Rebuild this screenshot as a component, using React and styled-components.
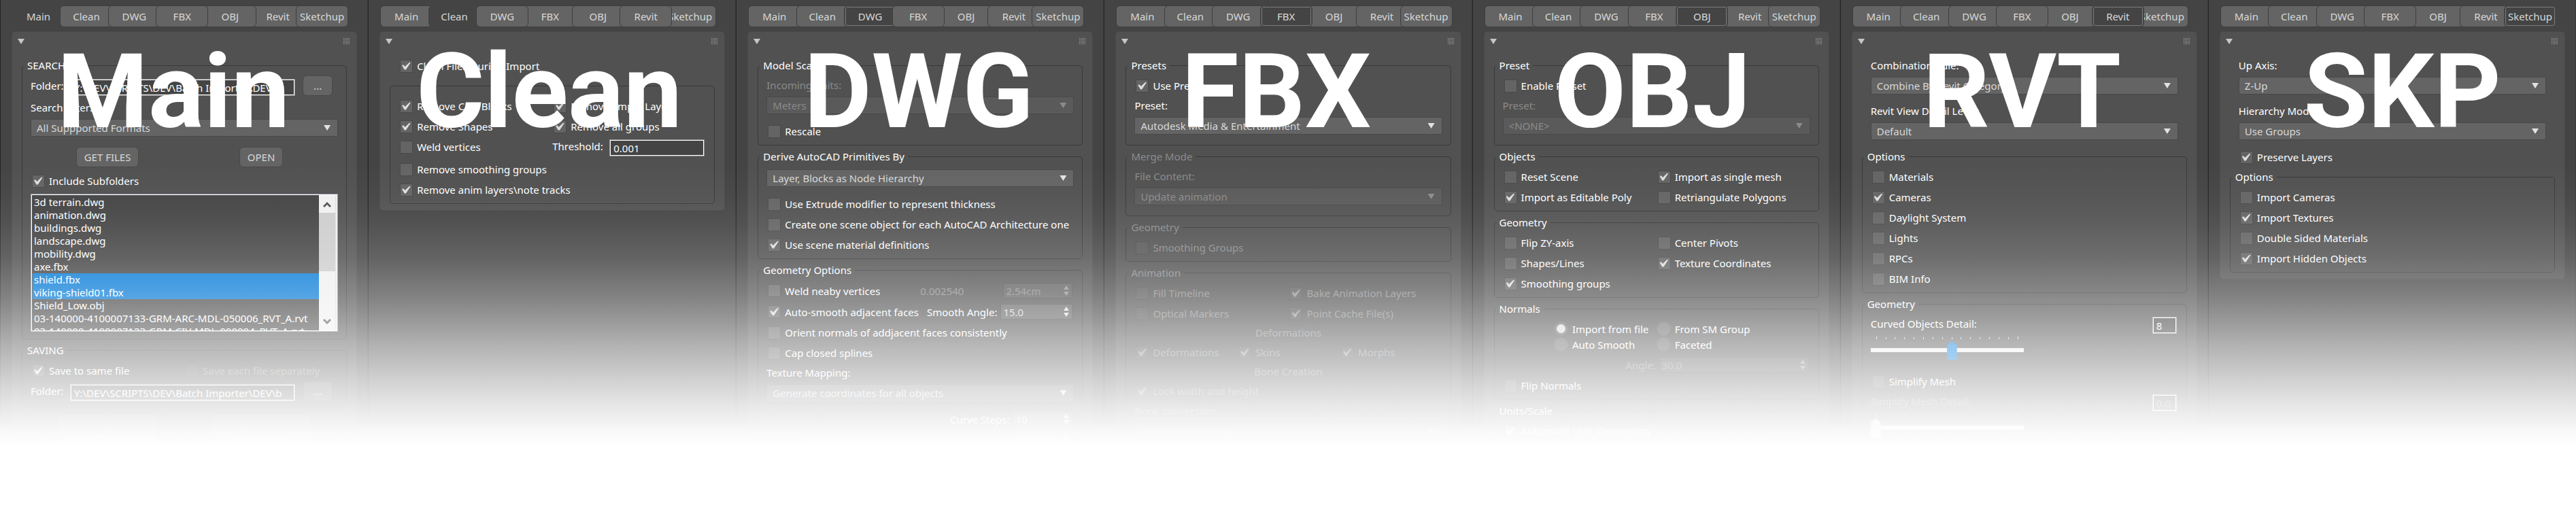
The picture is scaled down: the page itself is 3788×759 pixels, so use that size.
import React, { useId } from "react";
import styled, { createGlobalStyle, css } from "styled-components";

const GlobalStyle = createGlobalStyle`
  *, *::before, *::after { box-sizing: border-box; }
  body { margin: 0; background: #fff; }
  body, button, input, select { font-family: "Noto Sans", "DejaVu Sans Condensed", sans-serif; font-size: 15px; line-height: 20px; }
`;

const color = {
  window: "#444444",
  rollout: "#515151",
  control: "#646464",
  edge: "#494949",
  line: "#393939",
  text: "#ffffff",
  soft: "#d8d8d8",
  off: "#8b8b8b",
};

const Stage = styled.main`
  position: relative;
  display: grid;
  grid-template-columns: repeat(7, minmax(0, 1fr));
  height: 100vh;
  overflow: hidden;

  &::after {
    content: "";
    position: absolute;
    inset: 0;
    z-index: 10;
    pointer-events: none;
    background: linear-gradient(
      rgba(255, 255, 255, 0) 240px,
      rgba(255, 255, 255, 0.03) 290px,
      rgba(255, 255, 255, 0.08) 330px,
      rgba(255, 255, 255, 0.17) 380px,
      rgba(255, 255, 255, 0.32) 433px,
      rgba(255, 255, 255, 0.44) 467px,
      rgba(255, 255, 255, 0.56) 500px,
      rgba(255, 255, 255, 0.67) 533px,
      rgba(255, 255, 255, 0.78) 567px,
      rgba(255, 255, 255, 0.88) 600px,
      rgba(255, 255, 255, 0.96) 633px,
      #fff 656px
    );
  }
`;

const Panel = styled.section`
  position: relative;
  min-width: 0;
  padding: 8px 15px 0 16px;
  background: ${color.window};
  border-left: 1px solid #242424;
  border-right: 1px solid #3a3a3a;
  overflow: hidden;
`;

const Title = styled.h2`
  position: absolute;
  top: 49px;
  left: ${(p) => p.$x}px;
  z-index: 5;
  margin: 0;
  color: #fff;
  font: bold 153px/172px Roboto, "Liberation Sans", sans-serif;
  white-space: nowrap;
  pointer-events: none;
`;

const TabRow = styled.nav`
  display: grid;
  grid-template-columns: repeat(5, minmax(0, 1fr)) 65px 77px;
  padding: 0 13px 0 1px;
  margin-bottom: 6px;
  isolation: isolate;
`;

const Tab = styled.button`
  position: relative;
  z-index: ${(p) => p.$level};
  width: 77px;
  height: 32px;
  padding: 0;
  color: ${color.soft};
  background: ${(p) => (p.$active ? color.window : color.control)};
  border: 1px solid ${(p) => (p.$active ? color.window : "#3e3e3e")};
  border-radius: 6px;
  ${(p) => p.$focus && css`outline: 1px dotted #b4b4b4; outline-offset: -3px;`}
`;

const Rollout = styled.div`
  display: flex;
  flex-direction: column;
  padding: 0 14px 7px;
  background: ${color.rollout};
  border: 1px solid ${color.edge};
  border-radius: 5px;
`;

const RolloutBar = styled.header`
  display: flex;
  justify-content: space-between;
  align-items: center;
  height: 27px;
  margin: 0 -4px 8px -6px;
`;

const BarButton = styled.button`
  display: flex;
  padding: 0;
  border: 0;
  background: none;
`;

const Loose = styled.div`
  padding: 0 13px;
`;

const Group = styled.fieldset`
  min-width: 0;
  margin: ${(p) => (p.$bare ? "14px" : "4px")} 0 2px;
  padding: ${(p) => (p.$bare ? "14px" : "5px")} 12px 5px;
  border: 1px solid ${color.line};
  border-radius: 5px;
`;

const Legend = styled.legend`
  margin-left: -10px;
  padding: 0 5px;
  color: ${(p) => (p.$off ? color.off : color.text)};
`;

const Row = styled.div`
  display: grid;
  grid-template-columns: repeat(${(p) => p.$cols || 1}, minmax(0, 1fr));
`;

const ThresholdRow = styled(Row)`
  min-height: 33px;
`;

const SpinRow = styled.div`
  display: flex;
  align-items: center;
  height: 31px;
  padding-right: 2px;
`;

const CheckLabel = styled.label`
  display: flex;
  align-items: center;
  gap: 6px;
  height: 30px;
  padding-left: 2px;
  color: ${(p) => (p.$off ? color.off : color.text)};
  white-space: nowrap;
`;

const Box = styled.input`
  appearance: none;
  flex: none;
  display: grid;
  place-items: center;
  width: 19px;
  height: 19px;
  margin: 0;
  background: ${color.control};
  border: 1px solid ${color.edge};

  &:disabled { background: #575757; }

  &:checked::before {
    content: "";
    width: 13px;
    height: 11px;
    background: #dedede;
    clip-path: polygon(0 44%, 16% 34%, 34% 60%, 84% 2%, 100% 0, 90% 18%, 44% 100%, 28% 100%);
  }

  &:disabled:checked::before { background: #929292; }
`;

const RadioGrid = styled.div`
  display: grid;
  grid-template-columns: 1fr 2fr 2fr 1fr;
  grid-auto-rows: 23px;
  padding: 3px 0;
`;

const RadioLabel = styled.label`
  grid-column: ${(p) => p.$col};
  display: flex;
  align-items: center;
  gap: 6px;
  color: ${color.text};
  white-space: nowrap;
`;

const Radio = styled.input`
  appearance: none;
  flex: none;
  display: grid;
  place-items: center;
  width: 21px;
  height: 21px;
  margin: 0;
  background: ${color.control};
  border: 1px solid #5a5a5a;
  border-radius: 50%;

  &:checked::before {
    content: "";
    width: 13px;
    height: 13px;
    border-radius: 50%;
    background: #dedede;
  }
`;

const Caption = styled.label`
  display: block;
  padding: 4px 0 7px;
  color: ${(p) => (p.$off ? color.off : color.text)};
`;

const Subhead = styled.div`
  height: 27px;
  line-height: 27px;
  text-align: center;
  color: ${color.off};
`;

const SelectWrap = styled.div`
  position: relative;
  height: 26px;
  margin: ${(p) => (p.$alone ? "4px" : "0")} 0 10px;

  &::after {
    content: "";
    position: absolute;
    top: 9px;
    right: 11px;
    width: 10px;
    height: 8px;
    background: ${(p) => (p.$off ? color.off : "#e2e2e2")};
    clip-path: polygon(0 0, 100% 0, 50% 100%);
    pointer-events: none;
  }
`;

const SelectBox = styled.select`
  appearance: none;
  width: 100%;
  height: 26px;
  padding: 0 30px 0 8px;
  color: ${color.soft};
  background: ${color.control};
  border: 1px solid ${color.edge};
  border-radius: 0;
  opacity: 1;

  &:disabled { color: ${color.off}; background: #5a5a5a; }
`;

const FolderRow = styled.div`
  display: flex;
  align-items: flex-end;
  height: 30px;
  margin-bottom: 3px;
  padding-right: 8px;

  label { width: 58px; align-self: center; color: ${color.text}; }
`;

const Field = styled.input`
  flex: 1;
  min-width: 0;
  height: 25px;
  margin: 0;
  padding: 0 5px;
  color: ${color.text};
  background: ${color.window};
  border: 1px solid #fff;
  outline: 1px solid #8e8e8e;
  outline-offset: -1px;
  box-shadow: inset 0 0 0 1px #fff;
  border-radius: 0;
`;

const SmallField = styled(Field)`
  flex: none;
  width: 36px;
  margin-top: 4px;
  color: ${(p) => (p.disabled ? color.off : color.text)};
`;

const PushButton = styled.button`
  height: ${(p) => (p.$tall ? "72px" : "30px")};
  width: ${(p) => (p.$tall ? "148px" : "auto")};
  padding: 0 11px;
  color: ${color.soft};
  background: ${color.control};
  border: 1px solid ${color.edge};
  border-radius: 6px;
  white-space: nowrap;
`;

const BrowseButton = styled(PushButton)`
  width: 44px;
  margin-left: 11px;
  padding: 0;
`;

const ButtonRow = styled.div`
  display: grid;
  grid-template-columns: 1fr 1fr;
  place-items: center;
  height: 40px;
`;

const ImportRow = styled(ButtonRow)`
  height: 88px;
`;

const ListFrame = styled.div`
  display: flex;
  height: 203px;
  margin: 4px 0 5px;
  padding: 1px;
  background: ${color.window};
  border: 1px solid #8d939b;
  box-shadow: inset 0 0 0 1px #fff;
`;

const FileList = styled.ul`
  flex: 1;
  min-width: 0;
  margin: 0;
  padding: 1px 0 0 1px;
  list-style: none;
  overflow: hidden;
`;

const FileItem = styled.li`
  height: 19px;
  padding-left: 2px;
  line-height: 19px;
  color: #fff;
  white-space: nowrap;
  overflow: hidden;
  background: ${(p) => (p.$selected ? "#0078d7" : "transparent")};
`;

const ScrollStrip = styled.div`
  display: flex;
  flex-direction: column;
  width: 26px;
  background: #f0f0f0;
  border-right: 2px solid #e2e2e2;
`;

const ScrollArrow = styled.button`
  display: grid;
  place-items: center;
  height: 26px;
  padding: 0;
  border: 0;
  background: #f0f0f0;
`;

const ScrollThumb = styled.div`
  height: 86px;
  margin-bottom: auto;
  background: #cdcdcd;
`;

const SpinWrap = styled.span`
  position: relative;
  flex: none;
  display: flex;
  width: ${(p) => p.$w};
  margin-left: ${(p) => (p.$push ? "auto" : "5px")};

  svg { position: absolute; top: 4px; right: 5px; }
`;

const SpinInput = styled.input`
  width: 100%;
  height: 23px;
  margin: 0;
  padding: 0 20px 0 3px;
  color: ${color.soft};
  background: ${color.control};
  border: 1px solid ${color.edge};
  border-radius: 0;

  &:disabled { color: ${color.off}; background: #5a5a5a; }
`;

const SpinLabel = styled.label`
  margin-left: auto;
  color: ${(p) => (p.$off ? color.off : color.text)};
  white-space: nowrap;
`;

const HalfLabel = styled(SpinLabel)`
  width: 50%;
  margin: 0;
  text-align: right;
`;

const WeldValue = styled.output`
  position: absolute;
  left: 50%;
  color: ${color.off};
`;

const WeldRow = styled(SpinRow)`
  position: relative;
`;

const ThresholdField = styled.div`
  display: flex;
  align-items: flex-start;
  padding: 4px 2px 0 0;

  label { width: 84px; color: ${color.text}; }
`;

const DetailRow = styled.div`
  display: flex;
  justify-content: space-between;
  align-items: flex-start;
  height: 84px;
  padding-right: 2px;
`;

const DetailControl = styled.div`
  width: 50%;
`;

const DetailCaption = styled(Caption)`
  padding-bottom: 9px;
`;

const Ticks = styled.div`
  display: flex;
  justify-content: space-between;
  height: 5px;
  margin-bottom: 1px;
  padding: 0 8px;

  i { width: 1px; height: 3px; margin-top: 1px; background: #e0e0e0; }
  i:first-child, i:last-child { height: 4px; margin-top: 0; }
`;

const Slider = styled.input`
  appearance: none;
  display: block;
  width: 100%;
  height: 28px;
  margin: 0;
  background: none;

  &::-webkit-slider-runnable-track { height: 6px; background: #f0f0f0; }

  &::-webkit-slider-thumb {
    appearance: none;
    width: 15px;
    height: 28px;
    margin-top: -11px;
    background: ${(p) => (p.disabled ? "#cccccc" : "#0078d7")};
    clip-path: polygon(50% 0, 100% 25%, 100% 100%, 0 100%, 0 25%);
  }
`;

function Check({ label, on, off }) {
  return (
    <CheckLabel $off={off}>
      <Box type="checkbox" defaultChecked={on} disabled={off} />
      {label}
    </CheckLabel>
  );
}

function Choice({ label, value, off }) {
  const id = useId();
  return (
    <>
      {label && <Caption htmlFor={id} $off={off}>{label}</Caption>}
      <SelectWrap $off={off} $alone={!label}>
        <SelectBox id={id} disabled={off} aria-label={label ? undefined : value}>
          <option>{value}</option>
        </SelectBox>
      </SelectWrap>
    </>
  );
}

function Spinner({ id, value, w, off, push }) {
  return (
    <SpinWrap $w={w} $push={push}>
      <SpinInput id={id} defaultValue={value} disabled={off} aria-label={id ? undefined : value} />
      <svg width="8" height="15" viewBox="0 0 8 15" fill={off ? "#929292" : "#e2e2e2"} aria-hidden="true">
        <path d="M4 0 8 6H0ZM4 15 0 9h8Z" />
      </svg>
    </SpinWrap>
  );
}

function LabelledSpinner({ label, value, w, off }) {
  const id = useId();
  return (
    <SpinRow>
      <SpinLabel htmlFor={id} $off={off}>{label}</SpinLabel>
      <Spinner id={id} value={value} w={w} off={off} />
    </SpinRow>
  );
}

function Folder({ value }) {
  const id = useId();
  return (
    <FolderRow>
      <label htmlFor={id}>Folder:</label>
      <Field id={id} defaultValue={value} />
      <BrowseButton type="button" aria-label="Browse">...</BrowseButton>
    </FolderRow>
  );
}

function Detail({ label, value, max, at, off }) {
  const id = useId();
  return (
    <DetailRow>
      <DetailControl>
        <DetailCaption htmlFor={id} $off={off}>{label}</DetailCaption>
        <Ticks aria-hidden="true">{Array.from({ length: max + 1 }, (_, i) => <i key={i} />)}</Ticks>
        <Slider id={id} type="range" min="0" max={max} defaultValue={at} disabled={off} />
      </DetailControl>
      <SmallField defaultValue={value} disabled={off} aria-label={`${label} value`} />
    </DetailRow>
  );
}

function Section({ title, off, children }) {
  return (
    <Group $bare={!title} disabled={off}>
      {title && <Legend $off={off}>{title}</Legend>}
      {children}
    </Group>
  );
}

const files = [
  "3d terrain.dwg",
  "animation.dwg",
  "buildings.dwg",
  "landscape.dwg",
  "mobility.dwg",
  "axe.fbx",
  "shield.fbx",
  "viking-shield01.fbx",
  "Shield_Low.obj",
  "03-140000-4100007133-GRM-ARC-MDL-050006_RVT_A.rvt",
  "03-140000-4100007133-GRM-CIV-MDL-000004_RVT_A.rvt",
];

function MainBody() {
  return (
    <>
      <Section title="SEARCH">
        <Folder value="Y:\DEV\SCRIPTS\DEV\Batch Importer\DEV\" />
        <Choice label="Search Filter:" value="All Suppported Formats" />
        <ButtonRow>
          <PushButton type="button">GET FILES</PushButton>
          <PushButton type="button">OPEN</PushButton>
        </ButtonRow>
        <Check label="Include Subfolders" on />
        <ListFrame>
          <FileList role="listbox" aria-label="Files" aria-multiselectable="true">
            {files.map((name, i) => (
              <FileItem key={name} role="option" aria-selected={i === 6 || i === 7} $selected={i === 6 || i === 7}>
                {name}
              </FileItem>
            ))}
          </FileList>
          <ScrollStrip>
            <ScrollArrow type="button" aria-label="Scroll up">
              <svg width="12" height="9" viewBox="0 0 12 9" fill="none" stroke="#555" strokeWidth="3"><path d="m1 8 5-5 5 5" /></svg>
            </ScrollArrow>
            <ScrollThumb />
            <ScrollArrow type="button" aria-label="Scroll down">
              <svg width="12" height="9" viewBox="0 0 12 9" fill="none" stroke="#555" strokeWidth="3"><path d="m1 1 5 5 5-5" /></svg>
            </ScrollArrow>
          </ScrollStrip>
        </ListFrame>
      </Section>
      <Section title="SAVING">
        <Row $cols={2}>
          <Check label="Save to same file" on />
          <Check label="Save each file separately" off />
        </Row>
        <Folder value="Y:\DEV\SCRIPTS\DEV\Batch Importer\DEV\b" />
      </Section>
      <Loose>
        <ImportRow>
          <PushButton type="button" $tall>IMPORT SELECTED</PushButton>
          <PushButton type="button" $tall>IMPORT ALL</PushButton>
        </ImportRow>
      </Loose>
    </>
  );
}

function CleanBody() {
  const id = useId();
  return (
    <>
      <Loose><Check label="Clean Files During Import" on /></Loose>
      <Section>
        <Row $cols={2}>
          <Check label="Remove CAD Blocks" on />
          <Check label="Remove Empty Layers" on />
          <Check label="Remove Shapes" on />
          <Check label="Remove all groups" on />
        </Row>
        <ThresholdRow $cols={2}>
          <Check label="Weld vertices" />
          <ThresholdField>
            <label htmlFor={id}>Threshold:</label>
            <Field id={id} defaultValue="0.001" />
          </ThresholdField>
        </ThresholdRow>
        <Check label="Remove smoothing groups" />
        <Check label="Remove anim layers\note tracks" on />
      </Section>
    </>
  );
}

function DwgBody() {
  const id = useId();
  return (
    <>
      <Section title="Model Scale">
        <Choice label="Incoming units:" value="Meters" off />
        <Check label="Rescale" />
      </Section>
      <Section title="Derive AutoCAD Primitives By">
        <Choice value="Layer, Blocks as Node Hierarchy" />
        <Check label="Use Extrude modifier to represent thickness" />
        <Check label="Create one scene object for each AutoCAD Architecture one" />
        <Check label="Use scene material definitions" on />
      </Section>
      <Section title="Geometry Options">
        <WeldRow>
          <Check label="Weld neaby vertices" />
          <WeldValue>0.002540</WeldValue>
          <Spinner value="2.54cm" w="102px" off push />
        </WeldRow>
        <SpinRow>
          <Check label="Auto-smooth adjacent faces" on />
          <SpinLabel htmlFor={id}>Smooth Angle:</SpinLabel>
          <Spinner id={id} value="15.0" w="106px" />
        </SpinRow>
        <Check label="Orient normals of addjacent faces consistently" />
        <Check label="Cap closed splines" />
        <Choice label="Texture Mapping:" value="Generate coordinates for all objects" />
        <LabelledSpinner label="Curve Steps:" value="10" w="88px" />
        <LabelledSpinner label="Maximum surface deviation for 3D solids:" value="2.54cm" w="88px" />
      </Section>
    </>
  );
}

function FbxBody() {
  return (
    <>
      <Section title="Presets">
        <Check label="Use Preset" on />
        <Choice label="Preset:" value="Autodesk Media & Entertainment" />
      </Section>
      <Section title="Merge Mode" off>
        <Choice label="File Content:" value="Update animation" off />
      </Section>
      <Section title="Geometry" off>
        <Check label="Smoothing Groups" off />
      </Section>
      <Section title="Animation" off>
        <Row $cols={2}>
          <Check label="Fill Timeline" off />
          <Check label="Bake Animation Layers" on off />
          <Check label="Optical Markers" off />
          <Check label="Point Cache File(s)" on off />
        </Row>
        <Subhead>Deformations</Subhead>
        <Row $cols={3}>
          <Check label="Deformations" on off />
          <Check label="Skins" on off />
          <Check label="Morphs" on off />
        </Row>
        <Subhead>Bone Creation</Subhead>
        <Check label="Lock width and height" on off />
        <Choice label="Bone conversion:" value="Convert as Dummy" off />
      </Section>
    </>
  );
}

function ObjBody() {
  const id = useId();
  return (
    <>
      <Section title="Preset">
        <Check label="Enable Preset" />
        <Choice label="Preset:" value="<NONE>" off />
      </Section>
      <Section title="Objects">
        <Row $cols={2}>
          <Check label="Reset Scene" />
          <Check label="Import as single mesh" on />
          <Check label="Import as Editable Poly" on />
          <Check label="Retriangulate Polygons" />
        </Row>
      </Section>
      <Section title="Geometry">
        <Row $cols={2}>
          <Check label="Flip ZY-axis" />
          <Check label="Center Pivots" />
          <Check label="Shapes/Lines" />
          <Check label="Texture Coordinates" on />
          <Check label="Smoothing groups" on />
        </Row>
      </Section>
      <Section title="Normals">
        <RadioGrid>
          <RadioLabel $col={2}><Radio type="radio" name="normals" defaultChecked />Import from file</RadioLabel>
          <RadioLabel $col={3}><Radio type="radio" name="normals" />From SM Group</RadioLabel>
          <RadioLabel $col={2}><Radio type="radio" name="normals" />Auto Smooth</RadioLabel>
          <RadioLabel $col={3}><Radio type="radio" name="normals" />Faceted</RadioLabel>
        </RadioGrid>
        <SpinRow>
          <HalfLabel htmlFor={id} $off>Angle:</HalfLabel>
          <Spinner id={id} value="30.0" w="calc(50% - 5px)" off />
        </SpinRow>
        <Check label="Flip Normals" />
      </Section>
      <Section title="Units/Scale">
        <Check label="Automatic Unit Conversion" on />
      </Section>
    </>
  );
}

function RevitBody() {
  return (
    <>
      <Loose>
        <Choice label="Combination Rule:" value="Combine By Revit Category" />
        <Choice label="Revit View Detail Level:" value="Default" />
      </Loose>
      <Section title="Options">
        <Check label="Materials" />
        <Check label="Cameras" on />
        <Check label="Daylight System" />
        <Check label="Lights" />
        <Check label="RPCs" />
        <Check label="BIM Info" />
      </Section>
      <Section title="Geometry">
        <Detail label="Curved Objects Detail:" value="8" max={15} at={8} />
        <Check label="Simplify Mesh" />
        <Detail label="Simplify Mesh Detail:" value="0.0" max={5} at={0} off />
      </Section>
    </>
  );
}

function SketchupBody() {
  return (
    <>
      <Loose>
        <Choice label="Up Axis:" value="Z-Up" />
        <Choice label="Hierarchy Mode:" value="Use Groups" />
        <Check label="Preserve Layers" on />
      </Loose>
      <Section title="Options">
        <Check label="Import Cameras" />
        <Check label="Import Textures" on />
        <Check label="Double Sided Materials" />
        <Check label="Import Hidden Objects" on />
      </Section>
    </>
  );
}

const tabs = ["Main", "Clean", "DWG", "FBX", "OBJ", "Revit", "Sketchup"];

// levels: stacking order of the overlapping tab buttons
const panels = [
  { title: "Main", x: 83, levels: [0, 1, 2, 3, 2, 1, 2], Body: MainBody },
  { title: "Clean", x: 70, levels: [0, 1, 2, 0, 1, 2, 0], Body: CleanBody },
  { title: "DWG", x: 99, levels: [0, 1, 2, 3, 0, 1, 2], focus: true, Body: DwgBody },
  { title: "FBX", x: 113, levels: [0, 1, 2, 3, 0, 1, 2], focus: true, Body: FbxBody },
  { title: "OBJ", x: 120, levels: [0, 1, 2, 3, 4, 0, 1], focus: true, Body: ObjBody },
  { title: "RVT", x: 121, levels: [0, 1, 2, 3, 0, 4, 0], focus: true, Body: RevitBody },
  { title: "SKP", x: 140, levels: [0, 1, 2, 3, 0, 1, 2], focus: true, Body: SketchupBody },
];

export default function App() {
  return (
    <>
      <GlobalStyle />
      <Stage>
        {panels.map(({ title, x, levels, focus, Body }, n) => (
          <Panel key={title}>
            <TabRow aria-label={`${title} tabs`}>
              {tabs.map((name, i) => (
                <Tab key={name} type="button" $level={levels[i]} $active={i === n} $focus={focus && i === n}>
                  {name}
                </Tab>
              ))}
            </TabRow>
            <Rollout>
              <RolloutBar>
                <BarButton type="button" aria-label="Collapse">
                  <svg width="10" height="8" viewBox="0 0 10 8"><path d="M0 0h10L5 8Z" fill="#c6c6c6" /></svg>
                </BarButton>
                <svg width="9" height="9" viewBox="0 0 9 9" stroke="#a4a4a4" strokeDasharray="1 1" aria-hidden="true">
                  <path d="M0 .5h9M0 2.5h9M0 4.5h9M0 6.5h9M0 8.5h9" />
                </svg>
              </RolloutBar>
              <Body />
            </Rollout>
            <Title $x={x}>{title}</Title>
          </Panel>
        ))}
      </Stage>
    </>
  );
}
